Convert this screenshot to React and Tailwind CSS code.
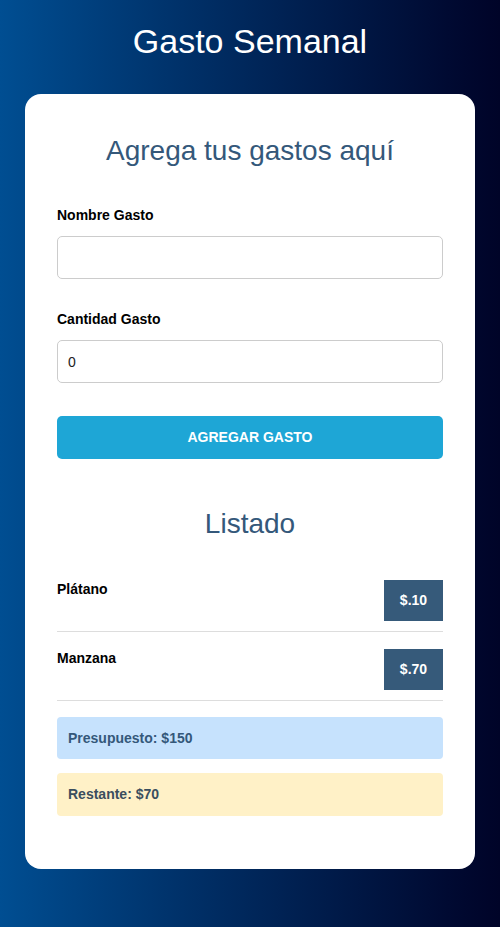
const gastos = [
  { id: 1, nombre: 'Plátano', cantidad: '10' },
  { id: 2, nombre: 'Manzana', cantidad: '70' },
];

const App = () => {
  return (
    <div
      className="min-h-[927px] bg-gradient-to-r from-[#004e92] to-[#000428] pt-[20px] pb-[58px] px-[25px]"
      style={{ fontFamily: '"Liberation Sans", Arial, sans-serif' }}
    >
      <h1 className="text-white text-center text-[34px] leading-[42px] mb-[32px]">Gasto Semanal</h1>

      <div className="bg-white rounded-[16px] px-[32px] pt-[40px] pb-[53px]">
        <h2 className="text-[#34587a] text-center text-[28px] leading-[34px] mb-[39px]">Agrega tus gastos aquí</h2>

        <label className="block text-[14px] font-bold text-black leading-[16px] mb-[13px]">Nombre Gasto</label>
        <input
          type="text"
          className="block w-full h-[43px] border border-[#cccccc] rounded-[5px] px-[10px] text-[14px] mb-[32px] outline-none"
        />

        <label className="block text-[14px] font-bold text-black leading-[16px] mb-[13px]">Cantidad Gasto</label>
        <input
          type="number"
          defaultValue="0"
          className="block w-full h-[43px] border border-[#cccccc] rounded-[5px] px-[10px] text-[14px] text-[#222] mb-[33px] outline-none"
        />

        <button className="block w-full h-[43px] bg-[#1ea6d6] rounded-[5px] text-white font-bold text-[14px] uppercase">
          Agregar Gasto
        </button>

        <h2 className="text-[#34587a] text-center text-[28px] leading-[34px] mt-[48px] mb-[39px]">Listado</h2>

        <ul>
          {gastos.map((g) => (
            <li key={g.id} className="flex justify-between items-start border-b border-[#dddddd] pb-[10px] mb-[17px] last:mb-[16px]">
              <p className="text-[14px] font-bold text-black leading-[16px] pt-[1px]">{g.nombre}</p>
              <span className="w-[59px] h-[41px] flex items-center justify-center bg-[#365a7a] text-white font-bold text-[14px]">
                $.{g.cantidad}
              </span>
            </li>
          ))}
        </ul>

        <div className="bg-[#c6e2fd] rounded-[4px] h-[42px] flex items-center px-[11px] text-[14px] font-bold text-[#34587a] mb-[14px]">
          Presupuesto: $150
        </div>
        <div className="bg-[#fff1c7] rounded-[4px] h-[43px] flex items-center px-[11px] text-[14px] font-bold text-[#3a4e5e]">
          Restante: $70
        </div>
      </div>
    </div>
  );
};

export default App;
